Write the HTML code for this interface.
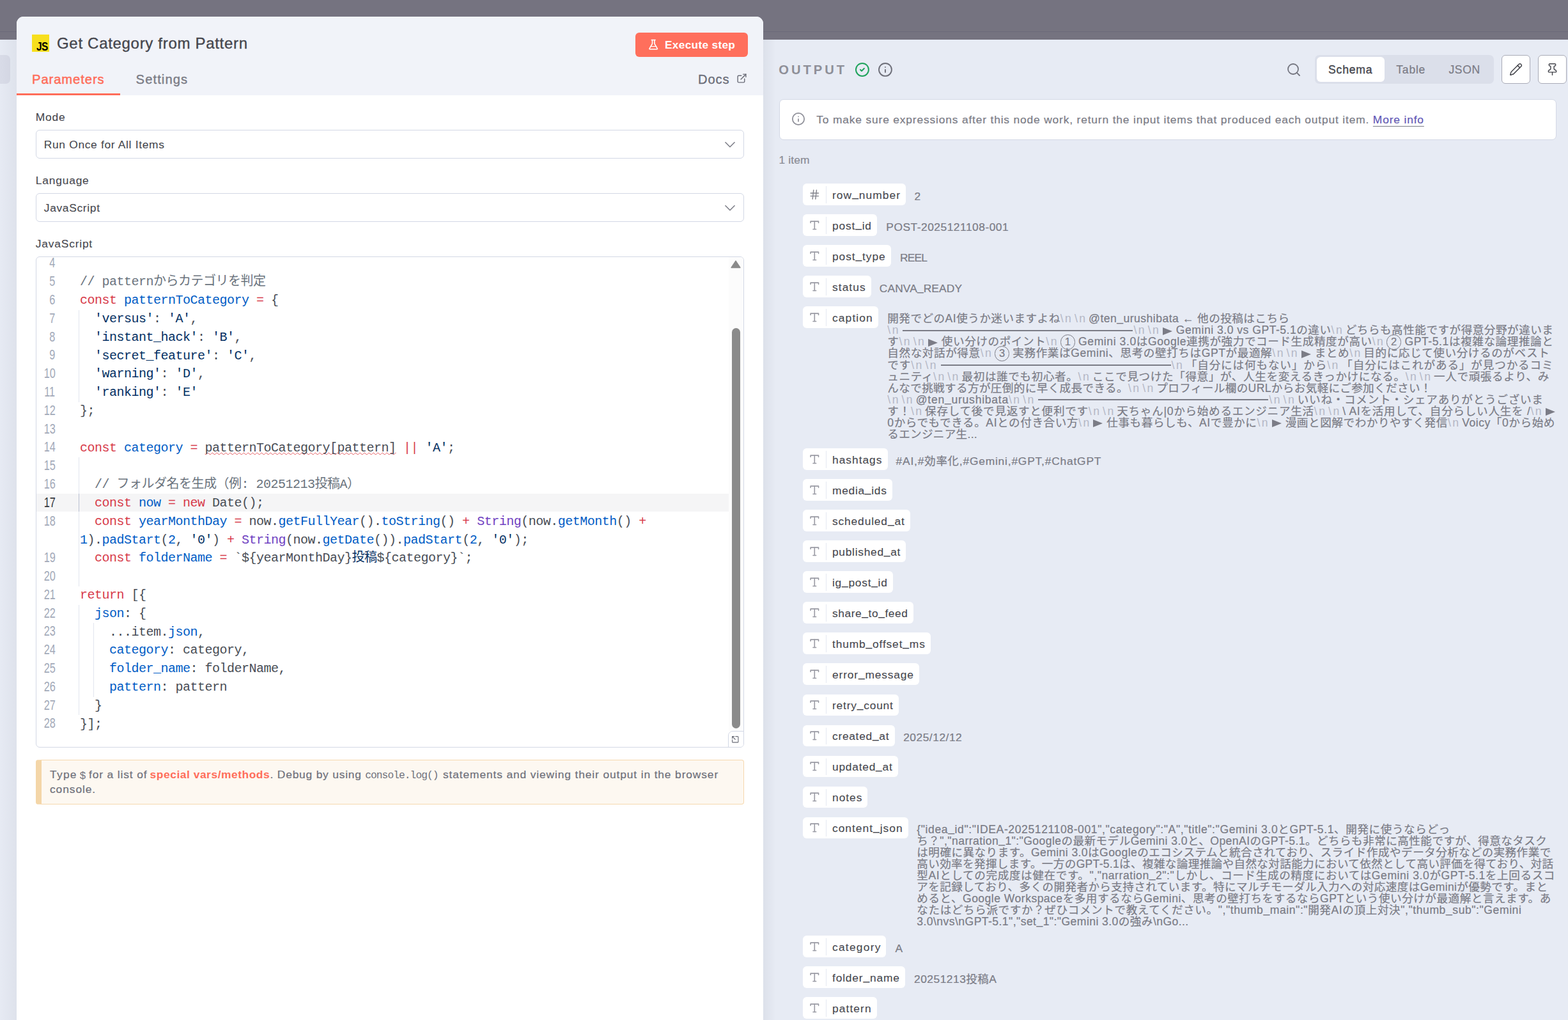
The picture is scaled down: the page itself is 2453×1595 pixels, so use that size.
<!DOCTYPE html><html><head><meta charset="utf-8"><title>n8n</title><style>
html,body{margin:0;padding:0}body{width:2453px;height:1595px;position:relative;overflow:hidden;background:#e7ebf4;font-family:'Liberation Sans', 'Noto Sans CJK JP', sans-serif}
.k{color:#d73a49}.v{color:#005cc5}.s{color:#032f62}.f{color:#6f42c1}.c{color:#6a737d}.j{}
.cl{position:absolute;left:125.4px;height:28.8px;line-height:28.8px;font-family:'Liberation Mono', 'Noto Sans CJK JP', monospace;font-size:20px;letter-spacing:-0.5px;--ls:-0.8px;color:#484d55;white-space:pre}
.ln{position:absolute;left:56.4px;width:30.5px;text-align:right;height:28.8px;line-height:28.8px;font-family:'Liberation Sans', sans-serif;font-size:22.3px;color:#a2a9b8;white-space:pre}
.ln span{display:inline-block;transform:scaleX(.73);transform-origin:100% 50%}
.nl{color:#b4b7c5;-webkit-text-stroke:0;letter-spacing:2.5px;margin-right:2.5px}
.vl{position:absolute;white-space:nowrap;font-size:17.6px;line-height:18.05px;height:18.05px;color:#7b7c86;-webkit-text-stroke:.2px #7b7c86;text-align:justify;text-align-last:justify}
.u{position:relative;top:-2.3px}
.ci{display:inline-block;position:relative;width:23.5px;height:14px;margin:0 5px 0 0;letter-spacing:0}.ci i{position:absolute;left:0;top:-3px;text-align-last:center;box-sizing:border-box;width:23.5px;height:23.5px;border:1.5px solid #7b7c86;border-radius:50%;font-style:normal;font-size:16.5px;line-height:20.5px;text-align:center}
.hr{display:inline-block;height:2px;background:#7b7c86;vertical-align:middle;margin:0 1px 2px 2px}
.tri{display:inline-block;width:0;height:0;border-left:15px solid #7b7c86;border-top:6.9px solid transparent;border-bottom:6.9px solid transparent;vertical-align:-1.5px;margin:0 6px 0 1px}
</style></head><body>
<div style="position:absolute;left:0px;top:0px;width:2453px;height:62px;background:#757380"></div>
<div style="position:absolute;left:0px;top:49px;width:2453px;height:1px;background:#6b6a79"></div>
<div style="position:absolute;left:0px;top:86px;width:16px;height:45px;background:#d9dce8;border-radius:0 7px 7px 0"></div>
<div style="position:absolute;left:0px;top:62px;width:26px;height:1533px;background:linear-gradient(to right,rgba(20,30,50,0.005) 0%,rgba(20,30,50,0.045) 100%)"></div>
<div style="position:absolute;left:1194px;top:62px;width:20px;height:1533px;background:linear-gradient(to right,rgba(20,30,50,0.05) 0%,rgba(20,30,50,0) 100%)"></div>
<div style="position:absolute;left:25.6px;top:25.8px;width:1168.6px;height:1580px;background:#fff;border-radius:11px 11px 0 0;overflow:hidden">
<div style="position:absolute;left:0;top:0;width:100%;height:123.2px;background:#f1f3f9"></div>
</div>
<div style="position:absolute;left:50px;top:54px;width:27px;height:27px;background:#f7df1e"></div>
<div style="position:absolute;left:57.2px;top:62.06px;font-family:'Liberation Sans', sans-serif;font-size:18px;line-height:23px;color:#000;font-weight:700;letter-spacing:-0.8px;--ls:-0.8px;white-space:nowrap;transform:scaleX(.86);transform-origin:0 50%;">JS</div>
<div style="position:absolute;left:89.0px;top:52.28px;font-family:'Liberation Sans', sans-serif;font-size:24px;line-height:31px;color:#45464d;font-weight:400;letter-spacing:0.69px;--ls:0.69px;white-space:nowrap;-webkit-text-stroke:0.35px #45464d;">Get Category from Pattern</div>
<div style="position:absolute;left:994px;top:51px;width:176px;height:38px;background:#ff6f5c;border-radius:6px"></div>
<svg style="position:absolute;left:1011.75px;top:61.2px" width="20.4" height="17.5" viewBox="0 0 24 24" preserveAspectRatio="none" fill="none" stroke="#fff" stroke-width="1.9" stroke-linecap="round" stroke-linejoin="round"><path d="M10 2v7.527a2 2 0 0 1-.211.896L4.72 20.55a1 1 0 0 0 .9 1.45h12.76a1 1 0 0 0 .9-1.45l-5.069-10.127A2 2 0 0 1 14 9.527V2"/><path d="M8.5 2h7"/><path d="M7 16h10"/></svg>
<div style="position:absolute;left:1040px;top:58.90px;font-family:'Liberation Sans', sans-serif;font-size:17.3px;line-height:22px;color:#fff;font-weight:700;letter-spacing:0.3px;--ls:0.3px;white-space:nowrap;">Execute step</div>
<div style="position:absolute;left:50.0px;top:111.30px;font-family:'Liberation Sans', sans-serif;font-size:20.2px;line-height:26px;color:#ff6d5a;font-weight:400;letter-spacing:0.92px;--ls:0.92px;white-space:nowrap;-webkit-text-stroke:0.5px #ff6d5a;">Parameters</div>
<div style="position:absolute;left:212.6px;top:111.30px;font-family:'Liberation Sans', sans-serif;font-size:20.2px;line-height:26px;color:#7b7c86;font-weight:400;letter-spacing:1.08px;--ls:1.08px;white-space:nowrap;-webkit-text-stroke:0.4px #7b7c86;">Settings</div>
<div style="position:absolute;left:1092.0px;top:111.30px;font-family:'Liberation Sans', sans-serif;font-size:20.2px;line-height:26px;color:#6b6d78;font-weight:400;letter-spacing:0.85px;--ls:0.85px;white-space:nowrap;-webkit-text-stroke:0.3px #6b6d78;">Docs</div>
<svg style="position:absolute;left:1152.3px;top:113.5px;" width="17" height="17" viewBox="0 0 24 24" fill="none" stroke="#6b6d78" stroke-width="2" stroke-linecap="round" stroke-linejoin="round"><path d="M15 3h6v6"/><path d="M10 14 21 3"/><path d="M18 13v6a2 2 0 0 1-2 2H5a2 2 0 0 1-2-2V8a2 2 0 0 1 2-2h6"/></svg>
<div style="position:absolute;left:25.6px;top:145.8px;width:162.4px;height:3.2px;background:#ff6d5a"></div>
<div style="position:absolute;left:55.8px;top:171.67px;font-family:'Liberation Sans', sans-serif;font-size:17.4px;line-height:23px;color:#45464d;font-weight:400;letter-spacing:0.8px;--ls:0.8px;white-space:nowrap;-webkit-text-stroke:0.08px #45464d;">Mode</div>
<div style="position:absolute;left:56px;top:203px;width:1108px;height:45px;box-sizing:border-box;border:1.5px solid #d3d8e5;border-radius:6px;background:#fff"></div>
<div style="position:absolute;left:68.8px;top:214.77px;font-family:'Liberation Sans', sans-serif;font-size:17.4px;line-height:23px;color:#45464d;font-weight:400;letter-spacing:0.67px;--ls:0.67px;white-space:nowrap;-webkit-text-stroke:0.08px #45464d;">Run Once for All Items</div>
<svg style="position:absolute;left:1126.5px;top:210.6px;stroke-linecap:butt;" width="30" height="30" viewBox="0 0 24 24" fill="none" stroke="#7c7d87" stroke-width="1.25" stroke-linecap="round" stroke-linejoin="round"><path d="m6 9 6 6 6-6"/></svg>
<div style="position:absolute;left:55.8px;top:270.97px;font-family:'Liberation Sans', sans-serif;font-size:17.4px;line-height:23px;color:#45464d;font-weight:400;letter-spacing:0.8px;--ls:0.8px;white-space:nowrap;-webkit-text-stroke:0.08px #45464d;">Language</div>
<div style="position:absolute;left:56px;top:302.3px;width:1108px;height:45px;box-sizing:border-box;border:1.5px solid #d3d8e5;border-radius:6px;background:#fff"></div>
<div style="position:absolute;left:68.8px;top:314.07px;font-family:'Liberation Sans', sans-serif;font-size:17.4px;line-height:23px;color:#45464d;font-weight:400;letter-spacing:0.67px;--ls:0.67px;white-space:nowrap;-webkit-text-stroke:0.08px #45464d;">JavaScript</div>
<svg style="position:absolute;left:1126.5px;top:309.90000000000003px;stroke-linecap:butt;" width="30" height="30" viewBox="0 0 24 24" fill="none" stroke="#7c7d87" stroke-width="1.25" stroke-linecap="round" stroke-linejoin="round"><path d="m6 9 6 6 6-6"/></svg>
<div style="position:absolute;left:55.8px;top:369.77px;font-family:'Liberation Sans', sans-serif;font-size:17.4px;line-height:23px;color:#45464d;font-weight:400;letter-spacing:0.8px;--ls:0.8px;white-space:nowrap;-webkit-text-stroke:0.08px #45464d;">JavaScript</div>
<div style="position:absolute;left:56px;top:401px;width:1108px;height:768px;box-sizing:border-box;border:1.5px solid #d3d8e5;border-radius:6px;background:#fff;overflow:hidden">
<div style="position:absolute;left:-57.5px;top:-402.5px;width:1300px;height:1200px">
<div style="position:absolute;left:57px;top:772.4px;width:1083.2px;height:28.4px;background:#f5f5f6"></div>
<div style="position:absolute;left:1140.2px;top:402px;width:23px;height:741.5px;background:#fcfcfc"></div>
<div style="position:absolute;left:123.0px;top:485.29999999999995px;width:1.4px;height:144.0px;background:#e2e5ee"></div>
<div style="position:absolute;left:123.0px;top:715.7px;width:1.4px;height:201.6px;background:#e2e5ee"></div>
<div style="position:absolute;left:123.0px;top:772.4px;width:1.4px;height:28.4px;background:#b9c0d2"></div>
<div style="position:absolute;left:123.0px;top:946.1px;width:1.4px;height:172.8px;background:#e2e5ee"></div>
<div style="position:absolute;left:146.3px;top:974.9px;width:1.4px;height:115.2px;background:#e2e5ee"></div>
<div class="ln" style="top:397.90px;color:#a2a9b8"><span>4</span></div>
<div class="ln" style="top:426.70px;color:#a2a9b8"><span>5</span></div>
<div class="cl" style="top:427.90px"><span class="c">// pattern<span class="j">からカテゴリを判定</span></span></div>
<div class="ln" style="top:455.50px;color:#a2a9b8"><span>6</span></div>
<div class="cl" style="top:456.70px"><span class="k">const</span> <span class="v">patternToCategory</span> <span class="k">=</span> {</div>
<div class="ln" style="top:484.30px;color:#a2a9b8"><span>7</span></div>
<div class="cl" style="top:485.50px">  <span class="s">'versus'</span>: <span class="s">'A'</span>,</div>
<div class="ln" style="top:513.10px;color:#a2a9b8"><span>8</span></div>
<div class="cl" style="top:514.30px">  <span class="s">'instant_hack'</span>: <span class="s">'B'</span>,</div>
<div class="ln" style="top:541.90px;color:#a2a9b8"><span>9</span></div>
<div class="cl" style="top:543.10px">  <span class="s">'secret_feature'</span>: <span class="s">'C'</span>,</div>
<div class="ln" style="top:570.70px;color:#a2a9b8"><span>10</span></div>
<div class="cl" style="top:571.90px">  <span class="s">'warning'</span>: <span class="s">'D'</span>,</div>
<div class="ln" style="top:599.50px;color:#a2a9b8"><span>11</span></div>
<div class="cl" style="top:600.70px">  <span class="s">'ranking'</span>: <span class="s">'E'</span></div>
<div class="ln" style="top:628.30px;color:#a2a9b8"><span>12</span></div>
<div class="cl" style="top:629.50px">};</div>
<div class="ln" style="top:657.10px;color:#a2a9b8"><span>13</span></div>
<div class="ln" style="top:685.90px;color:#a2a9b8"><span>14</span></div>
<div class="cl" style="top:687.10px"><span class="k">const</span> <span class="v">category</span> <span class="k">=</span> <span style="text-decoration:underline wavy #e5595f 1px;text-underline-offset:0.5px;text-decoration-skip-ink:none">patternToCategory[pattern]</span> <span class="k">||</span> <span class="s">'A'</span>;</div>
<div class="ln" style="top:714.70px;color:#a2a9b8"><span>15</span></div>
<div class="ln" style="top:743.50px;color:#a2a9b8"><span>16</span></div>
<div class="cl" style="top:744.70px">  <span class="c">// <span class="j">フォルダ名を生成（例</span>: 20251213<span class="j">投稿</span>A<span class="j">）</span></span></div>
<div class="ln" style="top:772.30px;color:#33363c"><span>17</span></div>
<div class="cl" style="top:773.50px">  <span class="k">const</span> <span class="v">now</span> <span class="k">=</span> <span class="k">new</span> Date();</div>
<div class="ln" style="top:801.10px;color:#a2a9b8"><span>18</span></div>
<div class="cl" style="top:802.30px">  <span class="k">const</span> <span class="v">yearMonthDay</span> <span class="k">=</span> now.<span class="v">getFullYear</span>().<span class="v">toString</span>() <span class="k">+</span> <span class="f">String</span>(now.<span class="v">getMonth</span>() <span class="k">+</span></div>
<div class="cl" style="top:831.10px"><span class="v">1</span>).<span class="v">padStart</span>(<span class="v">2</span>, <span class="s">'0'</span>) <span class="k">+</span> <span class="f">String</span>(now.<span class="v">getDate</span>()).<span class="v">padStart</span>(<span class="v">2</span>, <span class="s">'0'</span>);</div>
<div class="ln" style="top:858.70px;color:#a2a9b8"><span>19</span></div>
<div class="cl" style="top:859.90px">  <span class="k">const</span> <span class="v">folderName</span> <span class="k">=</span> `${yearMonthDay}<span class="s j">投稿</span>${category}`;</div>
<div class="ln" style="top:887.50px;color:#a2a9b8"><span>20</span></div>
<div class="ln" style="top:916.30px;color:#a2a9b8"><span>21</span></div>
<div class="cl" style="top:917.50px"><span class="k">return</span> [{</div>
<div class="ln" style="top:945.10px;color:#a2a9b8"><span>22</span></div>
<div class="cl" style="top:946.30px">  <span class="v">json</span>: {</div>
<div class="ln" style="top:973.90px;color:#a2a9b8"><span>23</span></div>
<div class="cl" style="top:975.10px">    ...item.<span class="v">json</span>,</div>
<div class="ln" style="top:1002.70px;color:#a2a9b8"><span>24</span></div>
<div class="cl" style="top:1003.90px">    <span class="v">category</span>: category,</div>
<div class="ln" style="top:1031.50px;color:#a2a9b8"><span>25</span></div>
<div class="cl" style="top:1032.70px">    <span class="v">folder_name</span>: folderName,</div>
<div class="ln" style="top:1060.30px;color:#a2a9b8"><span>26</span></div>
<div class="cl" style="top:1061.50px">    <span class="v">pattern</span>: pattern</div>
<div class="ln" style="top:1089.10px;color:#a2a9b8"><span>27</span></div>
<div class="cl" style="top:1090.30px">  }</div>
<div class="ln" style="top:1117.90px;color:#a2a9b8"><span>28</span></div>
<div class="cl" style="top:1119.10px">}];</div>
<svg style="position:absolute;left:1143.5px;top:407.5px" width="16" height="13" viewBox="0 0 16 13"><path d="M8 1.2 L14.8 11.5 L1.2 11.5 Z" fill="#8b8b8b" stroke="#8b8b8b" stroke-width="1.6" stroke-linejoin="round"/></svg>
<div style="position:absolute;left:1145px;top:513px;width:13px;height:626px;background:#8b8b8b;border-radius:6.5px"></div>
<div style="position:absolute;left:1139.4px;top:1143.3px;width:26px;height:27px;box-sizing:border-box;border:1.4px solid #d3d8e5;border-radius:7px 0 0 0;background:#fff"></div>
<svg style="position:absolute;left:1144.8px;top:1150.3px;" width="12.5" height="12.5" viewBox="0 0 24 24" fill="none" stroke="#6b6d78" stroke-width="2.2" stroke-linecap="round" stroke-linejoin="round"><path d="M13 3h6a2 2 0 0 1 2 2v14a2 2 0 0 1-2 2H5a2 2 0 0 1-2-2v-6"/><path d="m3 3 9 9"/><path d="M3 9V3h6"/></svg>
</div></div>
<div style="position:absolute;left:56px;top:1187.5px;width:1108px;height:70px;box-sizing:border-box;border:1.4px solid #f6d8ae;border-left:9.5px solid #f4d6a8;border-radius:4px;background:#fdf8f1"></div>
<div style="position:absolute;left:78.0px;top:1200.37px;font-family:'Liberation Sans', sans-serif;font-size:17.4px;line-height:23px;color:#6f717b;font-weight:400;letter-spacing:1.259px;--ls:1.259px;white-space:nowrap;-webkit-text-stroke:0.22px #6f717b;">Type</div>
<div style="position:absolute;left:124.4px;top:1203.01px;font-family:'Liberation Mono', monospace;font-size:16.5px;line-height:21px;color:#6f717b;font-weight:400;letter-spacing:-0.001px;--ls:-0.001px;white-space:nowrap;">$</div>
<div style="position:absolute;left:139.0px;top:1200.37px;font-family:'Liberation Sans', sans-serif;font-size:17.4px;line-height:23px;color:#6f717b;font-weight:400;letter-spacing:0.861px;--ls:0.861px;white-space:nowrap;-webkit-text-stroke:0.22px #6f717b;">for a list of</div>
<div style="position:absolute;left:234.6px;top:1200.37px;font-family:'Liberation Sans', sans-serif;font-size:17.4px;line-height:23px;color:#ff6d5a;font-weight:700;letter-spacing:0.538px;--ls:0.538px;white-space:nowrap;">special vars/methods</div>
<div style="position:absolute;left:422.6px;top:1200.37px;font-family:'Liberation Sans', sans-serif;font-size:17.4px;line-height:23px;color:#6f717b;font-weight:400;letter-spacing:0.788px;--ls:0.788px;white-space:nowrap;-webkit-text-stroke:0.22px #6f717b;">. Debug by using</div>
<div style="position:absolute;left:571.2px;top:1203.09px;font-family:'Liberation Mono', monospace;font-size:16.2px;line-height:21px;color:#6f717b;font-weight:400;letter-spacing:-0.915px;--ls:-0.915px;white-space:nowrap;">console.log()</div>
<div style="position:absolute;left:693.0px;top:1200.37px;font-family:'Liberation Sans', sans-serif;font-size:17.4px;line-height:23px;color:#6f717b;font-weight:400;letter-spacing:0.868px;--ls:0.868px;white-space:nowrap;-webkit-text-stroke:0.22px #6f717b;">statements and viewing their output in the browser</div>
<div style="position:absolute;left:78.0px;top:1222.77px;font-family:'Liberation Sans', sans-serif;font-size:17.4px;line-height:23px;color:#6f717b;font-weight:400;letter-spacing:0.913px;--ls:0.913px;white-space:nowrap;-webkit-text-stroke:0.22px #6f717b;">console.</div>
<div style="position:absolute;left:1218.2px;top:96.40px;font-family:'Liberation Sans', sans-serif;font-size:20.2px;line-height:26px;color:#8e8f98;font-weight:700;letter-spacing:4.0px;--ls:4.0px;white-space:nowrap;">OUTPUT</div>
<svg style="position:absolute;left:1337.05px;top:97px;" width="23.9" height="23.9" viewBox="0 0 24 24" fill="none" stroke="#1fa35c" stroke-width="2.0" stroke-linecap="round" stroke-linejoin="round"><circle cx="12" cy="12" r="10"/><path d="m9 12 2 2 4-4"/></svg>
<svg style="position:absolute;left:1372.95px;top:97px;" width="23.9" height="23.9" viewBox="0 0 24 24" fill="none" stroke="#6e6f79" stroke-width="1.9" stroke-linecap="round" stroke-linejoin="round"><circle cx="12" cy="12" r="10"/><path d="M12 16v-4"/><path d="M12 8h.01"/></svg>
<svg style="position:absolute;left:2011.5px;top:97px;" width="24" height="24" viewBox="0 0 24 24" fill="none" stroke="#74757f" stroke-width="1.8" stroke-linecap="round" stroke-linejoin="round"><circle cx="11" cy="11" r="8"/><path d="m21 21-4.3-4.3"/></svg>
<div style="position:absolute;left:2057px;top:86px;width:280px;height:45px;background:#dbdfea;border-radius:7px"></div>
<div style="position:absolute;left:2060px;top:89px;width:106.3px;height:39px;background:#fff;border-radius:6px"></div>
<div style="position:absolute;left:2078.0px;top:97.70px;font-family:'Liberation Sans', sans-serif;font-size:17.6px;line-height:23px;color:#45464d;font-weight:400;letter-spacing:0.8px;--ls:0.8px;white-space:nowrap;-webkit-text-stroke:0.35px #45464d;">Schema</div>
<div style="position:absolute;left:2184.3px;top:97.70px;font-family:'Liberation Sans', sans-serif;font-size:17.6px;line-height:23px;color:#7b7c86;font-weight:400;letter-spacing:0.75px;--ls:0.75px;white-space:nowrap;-webkit-text-stroke:0.2px #7b7c86;">Table</div>
<div style="position:absolute;left:2266.4px;top:97.70px;font-family:'Liberation Sans', sans-serif;font-size:17.6px;line-height:23px;color:#7b7c86;font-weight:400;letter-spacing:0.65px;--ls:0.65px;white-space:nowrap;-webkit-text-stroke:0.2px #7b7c86;">JSON</div>
<div style="position:absolute;left:2349px;top:86px;width:45px;height:45px;box-sizing:border-box;border:1.4px solid #a9abb7;border-radius:6px;background:#fff"></div>
<div style="position:absolute;left:2406px;top:86px;width:45px;height:45px;box-sizing:border-box;border:1.4px solid #a9abb7;border-radius:6px;background:#fff"></div>
<svg style="position:absolute;left:2360.8px;top:97.8px;" width="21" height="21" viewBox="0 0 24 24" fill="none" stroke="#45464d" stroke-width="1.7" stroke-linecap="round" stroke-linejoin="round"><path d="M21.174 6.812a1 1 0 0 0-3.986-3.987L3.842 16.174a2 2 0 0 0-.5.83l-1.321 4.352a.5.5 0 0 0 .623.622l4.353-1.32a2 2 0 0 0 .83-.497z"/><path d="m15 5 4 4"/></svg>
<svg style="position:absolute;left:2418.05px;top:97.8px;" width="21" height="21" viewBox="0 0 24 24" fill="none" stroke="#45464d" stroke-width="1.7" stroke-linecap="round" stroke-linejoin="round"><path d="M12 17v5"/><path d="M9 10.76a2 2 0 0 1-1.11 1.79l-1.78.9A2 2 0 0 0 5 15.24V16a1 1 0 0 0 1 1h12a1 1 0 0 0 1-1v-.76a2 2 0 0 0-1.11-1.79l-1.78-.9A2 2 0 0 1 15 10.76V7a1 1 0 0 1 1-1 2 2 0 0 0 0-4H8a2 2 0 0 0 0 4 1 1 0 0 1 1 1z"/></svg>
<div style="position:absolute;left:1219.4px;top:155.4px;width:1216.1px;height:63.8px;box-sizing:border-box;border:1.4px solid #d3d8e5;border-radius:7px;background:#fff"></div>
<svg style="position:absolute;left:1237.5px;top:175.3px;" width="22" height="22" viewBox="0 0 24 24" fill="none" stroke="#8f9099" stroke-width="1.9" stroke-linecap="round" stroke-linejoin="round"><circle cx="12" cy="12" r="10"/><path d="M12 16v-4"/><path d="M12 8h.01"/></svg>
<div style="position:absolute;left:1277.3px;top:175.67px;font-family:'Liberation Sans', sans-serif;font-size:17.4px;line-height:23px;color:#7b7c86;font-weight:400;letter-spacing:0.83px;--ls:0.83px;white-space:nowrap;-webkit-text-stroke:0.22px #7b7c86;">To make sure expressions after this node work, return the input items that produced each output item. <span style="color:#5a4fc4;text-decoration:underline;text-underline-offset:3.5px;text-decoration-thickness:1.4px">More info</span></div>
<div style="position:absolute;left:1218.6px;top:238.77px;font-family:'Liberation Sans', sans-serif;font-size:17.4px;line-height:23px;color:#8a8b94;font-weight:400;letter-spacing:0.1px;--ls:0.1px;white-space:nowrap;-webkit-text-stroke:0.22px #8a8b94;">1 item</div>
<div style="position:absolute;left:1256px;top:287.0px;width:161px;height:33.8px;background:#fff;border-radius:6px"></div>
<div style="position:absolute;left:1291.8px;top:291.0px;width:1.3px;height:26.8px;background:#e5e8f1"></div>
<svg style="position:absolute;left:1264.5px;top:294.6px;" width="18.6" height="18.6" viewBox="0 0 24 24" fill="none" stroke="#85868f" stroke-width="1.9" stroke-linecap="round" stroke-linejoin="round"><path d="M4 9h16"/><path d="M4 15h16"/><path d="M10 3 8 21"/><path d="m16 3-2 18"/></svg>
<div style="position:absolute;left:1302.0px;top:293.67px;font-family:'Liberation Sans', sans-serif;font-size:17.4px;line-height:23px;color:#45464d;font-weight:400;letter-spacing:1.032px;--ls:1.032px;white-space:nowrap;-webkit-text-stroke:0.08px #45464d;">row<span class="u">_</span>number</div>
<div style="position:absolute;left:1430.4px;top:295.67px;font-family:'Liberation Sans', sans-serif;font-size:17.4px;line-height:23px;color:#7b7c86;font-weight:400;letter-spacing:0.5px;--ls:0.5px;white-space:nowrap;-webkit-text-stroke:0.22px #7b7c86;">2</div>
<div style="position:absolute;left:1256px;top:335.1px;width:116px;height:33.8px;background:#fff;border-radius:6px"></div>
<div style="position:absolute;left:1291.8px;top:339.1px;width:1.3px;height:26.8px;background:#e5e8f1"></div>
<svg style="position:absolute;left:1264.5px;top:342.70000000000005px;" width="18.6" height="18.6" viewBox="0 0 24 24" fill="none" stroke="#9a9ba4" stroke-width="2.1" stroke-linecap="round" stroke-linejoin="round"><path d="M4 7V4h16v3"/><path d="M9 20h6"/><path d="M12 4v16"/></svg>
<div style="position:absolute;left:1302.0px;top:341.77px;font-family:'Liberation Sans', sans-serif;font-size:17.4px;line-height:23px;color:#45464d;font-weight:400;letter-spacing:0.815px;--ls:0.815px;white-space:nowrap;-webkit-text-stroke:0.08px #45464d;">post<span class="u">_</span>id</div>
<div style="position:absolute;left:1386.3px;top:343.77px;font-family:'Liberation Sans', sans-serif;font-size:17.4px;line-height:23px;color:#7b7c86;font-weight:400;letter-spacing:0.5px;--ls:0.5px;white-space:nowrap;-webkit-text-stroke:0.22px #7b7c86;">POST-2025121108-001</div>
<div style="position:absolute;left:1256px;top:383.2px;width:137.70000000000005px;height:33.8px;background:#fff;border-radius:6px"></div>
<div style="position:absolute;left:1291.8px;top:387.2px;width:1.3px;height:26.8px;background:#e5e8f1"></div>
<svg style="position:absolute;left:1264.5px;top:390.8px;" width="18.6" height="18.6" viewBox="0 0 24 24" fill="none" stroke="#9a9ba4" stroke-width="2.1" stroke-linecap="round" stroke-linejoin="round"><path d="M4 7V4h16v3"/><path d="M9 20h6"/><path d="M12 4v16"/></svg>
<div style="position:absolute;left:1302.0px;top:389.87px;font-family:'Liberation Sans', sans-serif;font-size:17.4px;line-height:23px;color:#45464d;font-weight:400;letter-spacing:0.906px;--ls:0.906px;white-space:nowrap;-webkit-text-stroke:0.08px #45464d;">post<span class="u">_</span>type</div>
<div style="position:absolute;left:1408px;top:391.87px;font-family:'Liberation Sans', sans-serif;font-size:17.4px;line-height:23px;color:#7b7c86;font-weight:400;letter-spacing:-0.85px;--ls:-0.85px;white-space:nowrap;-webkit-text-stroke:0.22px #7b7c86;">REEL</div>
<div style="position:absolute;left:1256px;top:431.2px;width:106.70000000000005px;height:33.8px;background:#fff;border-radius:6px"></div>
<div style="position:absolute;left:1291.8px;top:435.2px;width:1.3px;height:26.8px;background:#e5e8f1"></div>
<svg style="position:absolute;left:1264.5px;top:438.8px;" width="18.6" height="18.6" viewBox="0 0 24 24" fill="none" stroke="#9a9ba4" stroke-width="2.1" stroke-linecap="round" stroke-linejoin="round"><path d="M4 7V4h16v3"/><path d="M9 20h6"/><path d="M12 4v16"/></svg>
<div style="position:absolute;left:1302.0px;top:437.87px;font-family:'Liberation Sans', sans-serif;font-size:17.4px;line-height:23px;color:#45464d;font-weight:400;letter-spacing:1.055px;--ls:1.055px;white-space:nowrap;-webkit-text-stroke:0.08px #45464d;">status</div>
<div style="position:absolute;left:1375.8px;top:439.87px;font-family:'Liberation Sans', sans-serif;font-size:17.4px;line-height:23px;color:#7b7c86;font-weight:400;letter-spacing:0.1px;--ls:0.1px;white-space:nowrap;-webkit-text-stroke:0.22px #7b7c86;">CANVA<span class="u">_</span>READY</div>
<div style="position:absolute;left:1256px;top:479.3px;width:117.79999999999995px;height:33.8px;background:#fff;border-radius:6px"></div>
<div style="position:absolute;left:1291.8px;top:483.3px;width:1.3px;height:26.8px;background:#e5e8f1"></div>
<svg style="position:absolute;left:1264.5px;top:486.90000000000003px;" width="18.6" height="18.6" viewBox="0 0 24 24" fill="none" stroke="#9a9ba4" stroke-width="2.1" stroke-linecap="round" stroke-linejoin="round"><path d="M4 7V4h16v3"/><path d="M9 20h6"/><path d="M12 4v16"/></svg>
<div style="position:absolute;left:1302.0px;top:485.97px;font-family:'Liberation Sans', sans-serif;font-size:17.4px;line-height:23px;color:#45464d;font-weight:400;letter-spacing:1.115px;--ls:1.115px;white-space:nowrap;-webkit-text-stroke:0.08px #45464d;">caption</div>
<div style="position:absolute;left:1256px;top:701.1px;width:132.5px;height:33.8px;background:#fff;border-radius:6px"></div>
<div style="position:absolute;left:1291.8px;top:705.1px;width:1.3px;height:26.8px;background:#e5e8f1"></div>
<svg style="position:absolute;left:1264.5px;top:708.7px;" width="18.6" height="18.6" viewBox="0 0 24 24" fill="none" stroke="#9a9ba4" stroke-width="2.1" stroke-linecap="round" stroke-linejoin="round"><path d="M4 7V4h16v3"/><path d="M9 20h6"/><path d="M12 4v16"/></svg>
<div style="position:absolute;left:1302.0px;top:707.77px;font-family:'Liberation Sans', sans-serif;font-size:17.4px;line-height:23px;color:#45464d;font-weight:400;letter-spacing:0.983px;--ls:0.983px;white-space:nowrap;-webkit-text-stroke:0.08px #45464d;">hashtags</div>
<div style="position:absolute;left:1401.6px;top:709.77px;font-family:'Liberation Sans', 'Noto Sans CJK JP', sans-serif;font-size:17.4px;line-height:23px;color:#7b7c86;font-weight:400;letter-spacing:0.8px;--ls:0.8px;white-space:nowrap;-webkit-text-stroke:0.22px #7b7c86;">#AI,#効率化,#Gemini,#GPT,#ChatGPT</div>
<div style="position:absolute;left:1256px;top:749.1px;width:139.9000000000001px;height:33.8px;background:#fff;border-radius:6px"></div>
<div style="position:absolute;left:1291.8px;top:753.1px;width:1.3px;height:26.8px;background:#e5e8f1"></div>
<svg style="position:absolute;left:1264.5px;top:756.7px;" width="18.6" height="18.6" viewBox="0 0 24 24" fill="none" stroke="#9a9ba4" stroke-width="2.1" stroke-linecap="round" stroke-linejoin="round"><path d="M4 7V4h16v3"/><path d="M9 20h6"/><path d="M12 4v16"/></svg>
<div style="position:absolute;left:1302.0px;top:755.77px;font-family:'Liberation Sans', sans-serif;font-size:17.4px;line-height:23px;color:#45464d;font-weight:400;letter-spacing:0.698px;--ls:0.698px;white-space:nowrap;-webkit-text-stroke:0.08px #45464d;">media<span class="u">_</span>ids</div>
<div style="position:absolute;left:1256px;top:797.2px;width:167.79999999999995px;height:33.8px;background:#fff;border-radius:6px"></div>
<div style="position:absolute;left:1291.8px;top:801.2px;width:1.3px;height:26.8px;background:#e5e8f1"></div>
<svg style="position:absolute;left:1264.5px;top:804.8000000000001px;" width="18.6" height="18.6" viewBox="0 0 24 24" fill="none" stroke="#9a9ba4" stroke-width="2.1" stroke-linecap="round" stroke-linejoin="round"><path d="M4 7V4h16v3"/><path d="M9 20h6"/><path d="M12 4v16"/></svg>
<div style="position:absolute;left:1302.0px;top:803.87px;font-family:'Liberation Sans', sans-serif;font-size:17.4px;line-height:23px;color:#45464d;font-weight:400;letter-spacing:0.844px;--ls:0.844px;white-space:nowrap;-webkit-text-stroke:0.08px #45464d;">scheduled<span class="u">_</span>at</div>
<div style="position:absolute;left:1256px;top:845.2px;width:161.4000000000001px;height:33.8px;background:#fff;border-radius:6px"></div>
<div style="position:absolute;left:1291.8px;top:849.2px;width:1.3px;height:26.8px;background:#e5e8f1"></div>
<svg style="position:absolute;left:1264.5px;top:852.8000000000001px;" width="18.6" height="18.6" viewBox="0 0 24 24" fill="none" stroke="#9a9ba4" stroke-width="2.1" stroke-linecap="round" stroke-linejoin="round"><path d="M4 7V4h16v3"/><path d="M9 20h6"/><path d="M12 4v16"/></svg>
<div style="position:absolute;left:1302.0px;top:851.87px;font-family:'Liberation Sans', sans-serif;font-size:17.4px;line-height:23px;color:#45464d;font-weight:400;letter-spacing:0.701px;--ls:0.701px;white-space:nowrap;-webkit-text-stroke:0.08px #45464d;">published<span class="u">_</span>at</div>
<div style="position:absolute;left:1256px;top:893.3px;width:140.9000000000001px;height:33.8px;background:#fff;border-radius:6px"></div>
<div style="position:absolute;left:1291.8px;top:897.3px;width:1.3px;height:26.8px;background:#e5e8f1"></div>
<svg style="position:absolute;left:1264.5px;top:900.9px;" width="18.6" height="18.6" viewBox="0 0 24 24" fill="none" stroke="#9a9ba4" stroke-width="2.1" stroke-linecap="round" stroke-linejoin="round"><path d="M4 7V4h16v3"/><path d="M9 20h6"/><path d="M12 4v16"/></svg>
<div style="position:absolute;left:1302.0px;top:899.97px;font-family:'Liberation Sans', sans-serif;font-size:17.4px;line-height:23px;color:#45464d;font-weight:400;letter-spacing:0.73px;--ls:0.73px;white-space:nowrap;-webkit-text-stroke:0.08px #45464d;">ig<span class="u">_</span>post<span class="u">_</span>id</div>
<div style="position:absolute;left:1256px;top:941.3px;width:173px;height:33.8px;background:#fff;border-radius:6px"></div>
<div style="position:absolute;left:1291.8px;top:945.3px;width:1.3px;height:26.8px;background:#e5e8f1"></div>
<svg style="position:absolute;left:1264.5px;top:948.9px;" width="18.6" height="18.6" viewBox="0 0 24 24" fill="none" stroke="#9a9ba4" stroke-width="2.1" stroke-linecap="round" stroke-linejoin="round"><path d="M4 7V4h16v3"/><path d="M9 20h6"/><path d="M12 4v16"/></svg>
<div style="position:absolute;left:1302.0px;top:947.97px;font-family:'Liberation Sans', sans-serif;font-size:17.4px;line-height:23px;color:#45464d;font-weight:400;letter-spacing:0.562px;--ls:0.562px;white-space:nowrap;-webkit-text-stroke:0.08px #45464d;">share<span class="u">_</span>to<span class="u">_</span>feed</div>
<div style="position:absolute;left:1256px;top:989.4px;width:199.9000000000001px;height:33.8px;background:#fff;border-radius:6px"></div>
<div style="position:absolute;left:1291.8px;top:993.4px;width:1.3px;height:26.8px;background:#e5e8f1"></div>
<svg style="position:absolute;left:1264.5px;top:997.0px;" width="18.6" height="18.6" viewBox="0 0 24 24" fill="none" stroke="#9a9ba4" stroke-width="2.1" stroke-linecap="round" stroke-linejoin="round"><path d="M4 7V4h16v3"/><path d="M9 20h6"/><path d="M12 4v16"/></svg>
<div style="position:absolute;left:1302.0px;top:996.07px;font-family:'Liberation Sans', sans-serif;font-size:17.4px;line-height:23px;color:#45464d;font-weight:400;letter-spacing:0.839px;--ls:0.839px;white-space:nowrap;-webkit-text-stroke:0.08px #45464d;">thumb<span class="u">_</span>offset<span class="u">_</span>ms</div>
<div style="position:absolute;left:1256px;top:1037.4px;width:182px;height:33.8px;background:#fff;border-radius:6px"></div>
<div style="position:absolute;left:1291.8px;top:1041.4px;width:1.3px;height:26.8px;background:#e5e8f1"></div>
<svg style="position:absolute;left:1264.5px;top:1045.0px;" width="18.6" height="18.6" viewBox="0 0 24 24" fill="none" stroke="#9a9ba4" stroke-width="2.1" stroke-linecap="round" stroke-linejoin="round"><path d="M4 7V4h16v3"/><path d="M9 20h6"/><path d="M12 4v16"/></svg>
<div style="position:absolute;left:1302.0px;top:1044.07px;font-family:'Liberation Sans', sans-serif;font-size:17.4px;line-height:23px;color:#45464d;font-weight:400;letter-spacing:0.832px;--ls:0.832px;white-space:nowrap;-webkit-text-stroke:0.08px #45464d;">error<span class="u">_</span>message</div>
<div style="position:absolute;left:1256px;top:1085.5px;width:149.9000000000001px;height:33.8px;background:#fff;border-radius:6px"></div>
<div style="position:absolute;left:1291.8px;top:1089.5px;width:1.3px;height:26.8px;background:#e5e8f1"></div>
<svg style="position:absolute;left:1264.5px;top:1093.1px;" width="18.6" height="18.6" viewBox="0 0 24 24" fill="none" stroke="#9a9ba4" stroke-width="2.1" stroke-linecap="round" stroke-linejoin="round"><path d="M4 7V4h16v3"/><path d="M9 20h6"/><path d="M12 4v16"/></svg>
<div style="position:absolute;left:1302.0px;top:1092.17px;font-family:'Liberation Sans', sans-serif;font-size:17.4px;line-height:23px;color:#45464d;font-weight:400;letter-spacing:0.786px;--ls:0.786px;white-space:nowrap;-webkit-text-stroke:0.08px #45464d;">retry<span class="u">_</span>count</div>
<div style="position:absolute;left:1256px;top:1133.5px;width:143.5px;height:33.8px;background:#fff;border-radius:6px"></div>
<div style="position:absolute;left:1291.8px;top:1137.5px;width:1.3px;height:26.8px;background:#e5e8f1"></div>
<svg style="position:absolute;left:1264.5px;top:1141.1px;" width="18.6" height="18.6" viewBox="0 0 24 24" fill="none" stroke="#9a9ba4" stroke-width="2.1" stroke-linecap="round" stroke-linejoin="round"><path d="M4 7V4h16v3"/><path d="M9 20h6"/><path d="M12 4v16"/></svg>
<div style="position:absolute;left:1302.0px;top:1140.17px;font-family:'Liberation Sans', sans-serif;font-size:17.4px;line-height:23px;color:#45464d;font-weight:400;letter-spacing:0.697px;--ls:0.697px;white-space:nowrap;-webkit-text-stroke:0.08px #45464d;">created<span class="u">_</span>at</div>
<div style="position:absolute;left:1413.2px;top:1142.17px;font-family:'Liberation Sans', sans-serif;font-size:17.4px;line-height:23px;color:#7b7c86;font-weight:400;letter-spacing:0.5px;--ls:0.5px;white-space:nowrap;-webkit-text-stroke:0.22px #7b7c86;">2025/12/12</div>
<div style="position:absolute;left:1256px;top:1181.5px;width:148.79999999999995px;height:33.8px;background:#fff;border-radius:6px"></div>
<div style="position:absolute;left:1291.8px;top:1185.5px;width:1.3px;height:26.8px;background:#e5e8f1"></div>
<svg style="position:absolute;left:1264.5px;top:1189.1px;" width="18.6" height="18.6" viewBox="0 0 24 24" fill="none" stroke="#9a9ba4" stroke-width="2.1" stroke-linecap="round" stroke-linejoin="round"><path d="M4 7V4h16v3"/><path d="M9 20h6"/><path d="M12 4v16"/></svg>
<div style="position:absolute;left:1302.0px;top:1188.17px;font-family:'Liberation Sans', sans-serif;font-size:17.4px;line-height:23px;color:#45464d;font-weight:400;letter-spacing:0.746px;--ls:0.746px;white-space:nowrap;-webkit-text-stroke:0.08px #45464d;">updated<span class="u">_</span>at</div>
<div style="position:absolute;left:1256px;top:1229.6px;width:101.40000000000009px;height:33.8px;background:#fff;border-radius:6px"></div>
<div style="position:absolute;left:1291.8px;top:1233.6px;width:1.3px;height:26.8px;background:#e5e8f1"></div>
<svg style="position:absolute;left:1264.5px;top:1237.1999999999998px;" width="18.6" height="18.6" viewBox="0 0 24 24" fill="none" stroke="#9a9ba4" stroke-width="2.1" stroke-linecap="round" stroke-linejoin="round"><path d="M4 7V4h16v3"/><path d="M9 20h6"/><path d="M12 4v16"/></svg>
<div style="position:absolute;left:1302.0px;top:1236.27px;font-family:'Liberation Sans', sans-serif;font-size:17.4px;line-height:23px;color:#45464d;font-weight:400;letter-spacing:0.958px;--ls:0.958px;white-space:nowrap;-webkit-text-stroke:0.08px #45464d;">notes</div>
<div style="position:absolute;left:1256px;top:1277.5px;width:164.5999999999999px;height:33.8px;background:#fff;border-radius:6px"></div>
<div style="position:absolute;left:1291.8px;top:1281.5px;width:1.3px;height:26.8px;background:#e5e8f1"></div>
<svg style="position:absolute;left:1264.5px;top:1285.1px;" width="18.6" height="18.6" viewBox="0 0 24 24" fill="none" stroke="#9a9ba4" stroke-width="2.1" stroke-linecap="round" stroke-linejoin="round"><path d="M4 7V4h16v3"/><path d="M9 20h6"/><path d="M12 4v16"/></svg>
<div style="position:absolute;left:1302.0px;top:1284.17px;font-family:'Liberation Sans', sans-serif;font-size:17.4px;line-height:23px;color:#45464d;font-weight:400;letter-spacing:0.993px;--ls:0.993px;white-space:nowrap;-webkit-text-stroke:0.08px #45464d;">content<span class="u">_</span>json</div>
<div style="position:absolute;left:1256px;top:1463.2px;width:130.4000000000001px;height:33.8px;background:#fff;border-radius:6px"></div>
<div style="position:absolute;left:1291.8px;top:1467.2px;width:1.3px;height:26.8px;background:#e5e8f1"></div>
<svg style="position:absolute;left:1264.5px;top:1470.8px;" width="18.6" height="18.6" viewBox="0 0 24 24" fill="none" stroke="#9a9ba4" stroke-width="2.1" stroke-linecap="round" stroke-linejoin="round"><path d="M4 7V4h16v3"/><path d="M9 20h6"/><path d="M12 4v16"/></svg>
<div style="position:absolute;left:1302.0px;top:1469.87px;font-family:'Liberation Sans', sans-serif;font-size:17.4px;line-height:23px;color:#45464d;font-weight:400;letter-spacing:1.237px;--ls:1.237px;white-space:nowrap;-webkit-text-stroke:0.08px #45464d;">category</div>
<div style="position:absolute;left:1400.6px;top:1471.87px;font-family:'Liberation Sans', sans-serif;font-size:17.4px;line-height:23px;color:#7b7c86;font-weight:400;letter-spacing:0.5px;--ls:0.5px;white-space:nowrap;-webkit-text-stroke:0.22px #7b7c86;">A</div>
<div style="position:absolute;left:1256px;top:1511.2px;width:159.9000000000001px;height:33.8px;background:#fff;border-radius:6px"></div>
<div style="position:absolute;left:1291.8px;top:1515.2px;width:1.3px;height:26.8px;background:#e5e8f1"></div>
<svg style="position:absolute;left:1264.5px;top:1518.8px;" width="18.6" height="18.6" viewBox="0 0 24 24" fill="none" stroke="#9a9ba4" stroke-width="2.1" stroke-linecap="round" stroke-linejoin="round"><path d="M4 7V4h16v3"/><path d="M9 20h6"/><path d="M12 4v16"/></svg>
<div style="position:absolute;left:1302.0px;top:1517.87px;font-family:'Liberation Sans', sans-serif;font-size:17.4px;line-height:23px;color:#45464d;font-weight:400;letter-spacing:0.817px;--ls:0.817px;white-space:nowrap;-webkit-text-stroke:0.08px #45464d;">folder<span class="u">_</span>name</div>
<div style="position:absolute;left:1430px;top:1519.87px;font-family:'Liberation Sans', 'Noto Sans CJK JP', sans-serif;font-size:17.4px;line-height:23px;color:#7b7c86;font-weight:400;letter-spacing:0.5px;--ls:0.5px;white-space:nowrap;-webkit-text-stroke:0.22px #7b7c86;">20251213投稿A</div>
<div style="position:absolute;left:1256px;top:1559.1px;width:115.59999999999991px;height:33.8px;background:#fff;border-radius:6px"></div>
<div style="position:absolute;left:1291.8px;top:1563.1px;width:1.3px;height:26.8px;background:#e5e8f1"></div>
<svg style="position:absolute;left:1264.5px;top:1566.6999999999998px;" width="18.6" height="18.6" viewBox="0 0 24 24" fill="none" stroke="#9a9ba4" stroke-width="2.1" stroke-linecap="round" stroke-linejoin="round"><path d="M4 7V4h16v3"/><path d="M9 20h6"/><path d="M12 4v16"/></svg>
<div style="position:absolute;left:1302.0px;top:1565.77px;font-family:'Liberation Sans', sans-serif;font-size:17.4px;line-height:23px;color:#45464d;font-weight:400;letter-spacing:1.071px;--ls:1.071px;white-space:nowrap;-webkit-text-stroke:0.08px #45464d;">pattern</div>
<div class="vl" id="v1" style="left:1388.3px;top:489.30px;width:629.3px;letter-spacing:0.466px;--ls:0.466px">開発でどのAI使うか迷いますよね<span class="nl">\n</span><span class="nl">\n</span>@ten<span class="u">_</span>urushibata ← 他の投稿はこちら</div>
<div class="vl" id="v2" style="left:1388.3px;top:507.35px;width:1042.1px;letter-spacing:0.498px;--ls:0.498px"><span class="nl">\n</span><span class="hr" style="width:360px"></span><span class="nl">\n</span><span class="nl">\n</span><span class="tri"></span>Gemini 3.0 vs GPT-5.1の違い<span class="nl">\n</span>どちらも高性能ですが得意分野が違いま</div>
<div class="vl" id="v3" style="left:1388.3px;top:525.40px;width:1042.1px;letter-spacing:0.57px;--ls:0.57px">す<span class="nl">\n</span><span class="nl">\n</span><span class="tri"></span>使い分けのポイント<span class="nl">\n</span><span class="ci"><i>1</i></span>Gemini 3.0はGoogle連携が強力でコード生成精度が高い<span class="nl">\n</span><span class="ci"><i>2</i></span>GPT-5.1は複雑な論理推論と</div>
<div class="vl" id="v4" style="left:1388.3px;top:543.45px;width:1035.7px;letter-spacing:0.574px;--ls:0.574px">自然な対話が得意<span class="nl">\n</span><span class="ci"><i>3</i></span>実務作業はGemini、思考の壁打ちはGPTが最適解<span class="nl">\n</span><span class="nl">\n</span><span class="tri"></span>まとめ<span class="nl">\n</span>目的に応じて使い分けるのがベスト</div>
<div class="vl" id="v5" style="left:1388.3px;top:561.50px;width:1042.1px;letter-spacing:0.855px;--ls:0.855px">です<span class="nl">\n</span><span class="nl">\n</span><span class="hr" style="width:360px"></span><span class="nl">\n</span>「自分には何もない」から<span class="nl">\n</span>「自分にはこれがある」が見つかるコミ</div>
<div class="vl" id="v6" style="left:1388.3px;top:579.55px;width:1035.7px;letter-spacing:0.539px;--ls:0.539px">ュニティ<span class="nl">\n</span><span class="nl">\n</span>最初は誰でも初心者。<span class="nl">\n</span>ここで見つけた「得意」が、人生を変えるきっかけになる。<span class="nl">\n</span><span class="nl">\n</span>一人で頑張るより、み</div>
<div class="vl" id="v7" style="left:1388.3px;top:597.60px;width:851.5px;letter-spacing:0.335px;--ls:0.335px">んなで挑戦する方が圧倒的に早く成長できる。<span class="nl">\n</span><span class="nl">\n</span>プロフィール欄のURLからお気軽にご参加ください！</div>
<div class="vl" id="v8" style="left:1388.3px;top:615.65px;width:1026.3px;letter-spacing:0.734px;--ls:0.734px"><span class="nl">\n</span><span class="nl">\n</span>@ten<span class="u">_</span>urushibata<span class="nl">\n</span><span class="nl">\n</span><span class="hr" style="width:360px"></span><span class="nl">\n</span><span class="nl">\n</span>いいね・コメント・シェアありがとうございま</div>
<div class="vl" id="v9" style="left:1388.3px;top:633.70px;width:1046.3px;letter-spacing:0.709px;--ls:0.709px">す！<span class="nl">\n</span>保存して後で見返すと便利です<span class="nl">\n</span><span class="nl">\n</span>天ちゃん|0から始めるエンジニア生活<span class="nl">\n</span><span class="nl">\n</span>\ AIを活用して、自分らしい人生を /<span class="nl">\n</span><span class="tri"></span></div>
<div class="vl" id="v10" style="left:1388.3px;top:651.75px;width:1044.7px;letter-spacing:0.525px;--ls:0.525px">0からでもできる。AIとの付き合い方<span class="nl">\n</span><span class="tri"></span>仕事も暮らしも、AIで豊かに<span class="nl">\n</span><span class="tri"></span>漫画と図解でわかりやすく発信<span class="nl">\n</span>Voicy「0から始め</div>
<div class="vl" id="v11" style="left:1388.3px;top:669.80px;width:140.7px;letter-spacing:0.287px;--ls:0.287px">るエンジニア生...</div>
<div class="vl" id="v12" style="left:1434.3px;top:1287.50px;width:834.5px;letter-spacing:0.58px;--ls:0.58px">{&quot;idea<span class="u">_</span>id&quot;:&quot;IDEA-2025121108-001&quot;,&quot;category&quot;:&quot;A&quot;,&quot;title&quot;:&quot;Gemini 3.0とGPT-5.1、開発に使うならどっ</div>
<div class="vl" id="v13" style="left:1434.3px;top:1305.55px;width:986.1px;letter-spacing:0.414px;--ls:0.414px">ち？&quot;,&quot;narration<span class="u">_</span>1&quot;:&quot;Googleの最新モデルGemini 3.0と、OpenAIのGPT-5.1。どちらも非常に高性能ですが、得意なタスク</div>
<div class="vl" id="v14" style="left:1434.3px;top:1323.60px;width:992.4px;letter-spacing:0.376px;--ls:0.376px">は明確に異なります。Gemini 3.0はGoogleのエコシステムと統合されており、スライド作成やデータ分析などの実務作業で</div>
<div class="vl" id="v15" style="left:1434.3px;top:1341.65px;width:996.1px;letter-spacing:0.266px;--ls:0.266px">高い効率を発揮します。一方のGPT-5.1は、複雑な論理推論や自然な対話能力において依然として高い評価を得ており、対話</div>
<div class="vl" id="v16" style="left:1434.3px;top:1359.70px;width:998.7px;letter-spacing:0.529px;--ls:0.529px">型AIとしての完成度は健在です。&quot;,&quot;narration<span class="u">_</span>2&quot;:&quot;しかし、コード生成の精度においてはGemini 3.0がGPT-5.1を上回るスコ</div>
<div class="vl" id="v17" style="left:1434.3px;top:1377.75px;width:987.1px;letter-spacing:0.284px;--ls:0.284px">アを記録しており、多くの開発者から支持されています。特にマルチモーダル入力への対応速度はGeminiが優勢です。まと</div>
<div class="vl" id="v18" style="left:1434.3px;top:1395.80px;width:992.4px;letter-spacing:0.452px;--ls:0.452px">めると、Google Workspaceを多用するならGemini、思考の壁打ちをするならGPTという使い分けが最適解と言えます。あ</div>
<div class="vl" id="v19" style="left:1434.3px;top:1413.85px;width:946.1px;letter-spacing:0.552px;--ls:0.552px">なたはどちら派ですか？ぜひコメントで教えてください。&quot;,&quot;thumb<span class="u">_</span>main&quot;:&quot;開発AIの頂上対決&quot;,&quot;thumb<span class="u">_</span>sub&quot;:&quot;Gemini</div>
<div class="vl" id="v20" style="left:1434.3px;top:1431.90px;width:425.4px;letter-spacing:0.425px;--ls:0.425px">3.0\nvs\nGPT-5.1&quot;,&quot;set<span class="u">_</span>1&quot;:&quot;Gemini 3.0の強み\nGo...</div>
</body></html>
